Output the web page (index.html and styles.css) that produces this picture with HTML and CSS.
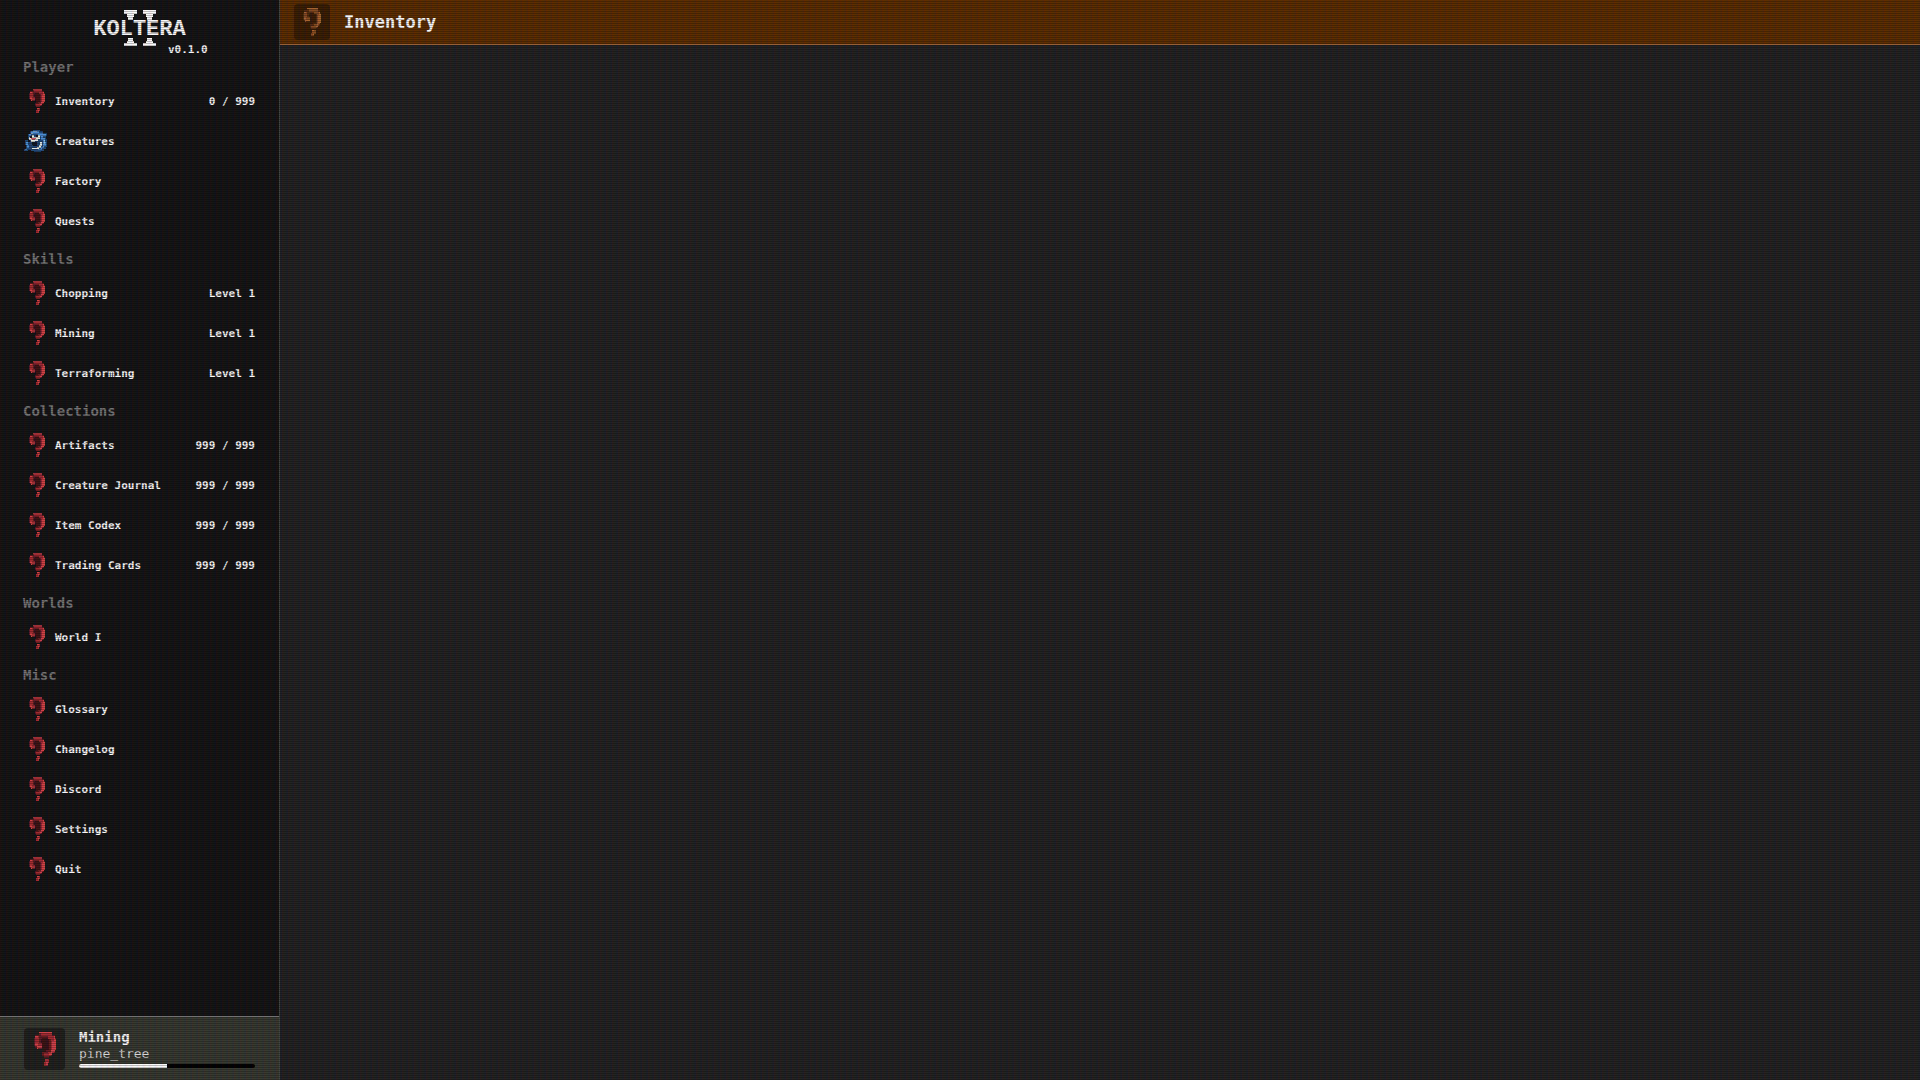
FILE: index.html
```html
<!DOCTYPE html>
<html lang="en">
<head>
  <meta charset="UTF-8">
  <meta name="viewport" content="width=device-width, initial-scale=1.0">
  <title>Koltera II</title>
  <link rel="stylesheet" href="styles.css">
</head>
<body>
  <!-- Shared sprites -->
  <svg class="sprites" aria-hidden="true">
    <symbol id="unknown" viewBox="0 0 16 24" shape-rendering="crispEdges">
      <path fill="var(--shade)" d="M4 3h8v10h-2v1H7v-3H4z"/>
      <path fill="var(--dark)" d="M4 0h9v2h2v2h1v9h-1v2h-2v2h-2v1H7v-1H6v-3h3v-1h2V5h-1V4H6v1H5v4h1v3H3v-1H1v-1H0V4h1V2h3z"/>
      <path fill="var(--mid)" d="M5 1h8v2h2v10h-1v2h-2v2H7v-2h3v-1h2V5h-2V3H4v5h2v3H3v-1H1V4h1V3h3z"/>
      <path fill="var(--light)" d="M4 0h9v1H4zM1 3h2v1H1zM14 3h1v2h1v8h-1v1h-2v2h-2v-1h1v-2h1V6h1zM1 8h2v2h3v1H3v1H2v-2H1z"/>
      <path fill="var(--mid)" d="M8 19h3v3h-1v2H7v-3h1z"/>
      <path fill="var(--light)" d="M8 19h2v1H8zM9 21h1v2H9z"/>
    </symbol>
    <symbol id="creature" viewBox="0 0 24 24" shape-rendering="crispEdges">
      <path fill="#214a78" d="M6 2h3V1h7v1h3v2h4v3h-1v3h1v8h-1v2h-2v2h-3v1h-7v-1H7v-1H4v1H0v-2h2v-4H1v-5h3v2h2v-3H4V5h2z"/>
      <path fill="#4d91d8" d="M7 2h8v2h4v1h3v2h-3v2h2v4h1v4h-2v2h-2v2h-4v-1h3v-2h2v-7h-2V7h-3V5H9V4H7v3H5V5h2zM2 13h2v3h1v3H3v2H1v-1h2v-4H2z"/>
      <path fill="#9bc8ef" d="M9 2h4v1H9zM7 4h2v1H7zM20 11h1v4h-1z"/>
      <path fill="#e8eee5" d="M5 8h3V6h2v2h4V6h2v4h-2v2h-3v1H7v-2H5zM16 13h2v4h-1v2h-2v1H8v-1h5v-1h2v-2h1z"/>
      <path fill="#101923" d="M6 7h2v2H6zM12 6h2v2h-2zM8 13h5v4H9v-1H8z"/>
      <path fill="#c4545c" d="M7 9h5v1h-1v1H8v-1H7z"/>
    </symbol>
  </svg>

  <div class="app">
    <aside class="sidebar">
      <header class="brand">
        <svg class="logo" viewBox="0 0 96 37" role="img" aria-label="II" shape-rendering="crispEdges">
          <path d="M32 0h13v4h-3v3h-1v3h-5V7h-1V4h-3zM51 0h13v4h-3v3h-1v3h-5V7h-1V4h-3zM36 28h5v3h1v2h3v3H32v-3h3v-2h1zM55 28h5v3h1v2h3v3H51v-3h3v-2h1z"/>
        </svg>
        <h1>KOLTERA</h1>
        <span class="version">v0.1.0</span>
      </header>

      <nav class="menu" aria-label="Main">
        <h2>Player</h2>
        <a href="#inventory"><svg><use href="#unknown"/></svg><span>Inventory</span><small>0 / 999</small></a>
        <a href="#creatures"><svg class="fish"><use href="#creature"/></svg><span>Creatures</span></a>
        <a href="#factory"><svg><use href="#unknown"/></svg><span>Factory</span></a>
        <a href="#quests"><svg><use href="#unknown"/></svg><span>Quests</span></a>

        <h2>Skills</h2>
        <a href="#chopping"><svg><use href="#unknown"/></svg><span>Chopping</span><small>Level 1</small></a>
        <a href="#mining"><svg><use href="#unknown"/></svg><span>Mining</span><small>Level 1</small></a>
        <a href="#terraforming"><svg><use href="#unknown"/></svg><span>Terraforming</span><small>Level 1</small></a>

        <h2>Collections</h2>
        <a href="#artifacts"><svg><use href="#unknown"/></svg><span>Artifacts</span><small>999 / 999</small></a>
        <a href="#journal"><svg><use href="#unknown"/></svg><span>Creature Journal</span><small>999 / 999</small></a>
        <a href="#codex"><svg><use href="#unknown"/></svg><span>Item Codex</span><small>999 / 999</small></a>
        <a href="#cards"><svg><use href="#unknown"/></svg><span>Trading Cards</span><small>999 / 999</small></a>

        <h2>Worlds</h2>
        <a href="#world-1"><svg><use href="#unknown"/></svg><span>World I</span></a>

        <h2>Misc</h2>
        <a href="#glossary"><svg><use href="#unknown"/></svg><span>Glossary</span></a>
        <a href="#changelog"><svg><use href="#unknown"/></svg><span>Changelog</span></a>
        <a href="#discord"><svg><use href="#unknown"/></svg><span>Discord</span></a>
        <a href="#settings"><svg><use href="#unknown"/></svg><span>Settings</span></a>
        <a href="#quit"><svg><use href="#unknown"/></svg><span>Quit</span></a>
      </nav>

      <section class="activity">
        <div class="tile"><svg><use href="#unknown"/></svg></div>
        <div class="activity-info">
          <strong>Mining</strong>
          <span id="task">pine_tree</span>
          <progress value="50" max="100" aria-labelledby="task"></progress>
        </div>
      </section>
    </aside>

    <main class="page">
      <header class="page-header">
        <div class="tile"><svg><use href="#unknown"/></svg></div>
        <h2>Inventory</h2>
      </header>
    </main>
  </div>
</body>
</html>
```

FILE: styles.css
```css
* { box-sizing: border-box; }
body {
  --shade: #3c1316;
  --dark: #651d22;
  --mid: #a22b32;
  --light: #d24348;
  margin: 0;
  background: #222;
  color: #fff;
  font-family: "DejaVu Sans Mono", "Liberation Mono", monospace;
  font-weight: bold;
}
h1, h2 { margin: 0; }
.sprites { position: absolute; width: 0; height: 0; }
.app { display: flex; min-height: 100vh; }

/* Sidebar */
.sidebar {
  display: flex;
  flex-direction: column;
  flex: 0 0 280px;
  background: #141414;
  border-right: 1px solid #454545;
}
.brand {
  position: relative;
  height: 57px;
  padding-top: 10px;
  text-align: center;
}
.logo { width: 96px; height: 37px; fill: #fff; }
.brand h1 {
  position: absolute;
  top: 15px;
  width: 100%;
  font-family: "Liberation Mono", monospace;
  font-size: 22px;
  line-height: 30px;
}
.version {
  position: absolute;
  top: 42px;
  left: 168px;
  font-size: 11px;
  line-height: 15px;
}
.menu { flex: 1; padding: 0 24px 0 23px; }
.menu h2 {
  height: 24px;
  margin-top: 8px;
  color: #777;
  font-size: 14px;
  line-height: 20px;
}
.menu h2:first-child { margin-top: 0; }
.menu a {
  display: flex;
  align-items: center;
  gap: 9px;
  height: 40px;
  padding-left: 5px;
  color: #fff;
  font-size: 11px;
  text-decoration: none;
}
.menu a:hover { background: #222; }
.menu svg { width: 18px; height: 24px; }
.menu .fish { width: 24px; height: 24px; margin: 0 -2px 0 -4px; }
.menu small { margin-left: auto; font-size: 11px; }

/* Current activity */
.activity {
  display: flex;
  align-items: center;
  gap: 14px;
  height: 64px;
  padding: 0 24px;
  background: #373a31;
  border-top: 1px solid #747474;
}
.tile {
  display: grid;
  place-items: center;
  width: 41px;
  height: 42px;
  border-radius: 4px;
  background: #20211e;
}
.tile svg { width: 24px; height: 34px; }
.activity-info { display: flex; flex: 1; flex-direction: column; }
.activity strong { font-size: 14px; line-height: 16px; }
.activity span { padding-bottom: 2px; color: #ddd; font-size: 13px; font-weight: normal; line-height: 17px; }
.activity progress {
  width: 100%;
  height: 4px;
  appearance: none;
  border: 0;
  border-radius: 2px;
  overflow: hidden;
  background: #000;
}
.activity progress::-webkit-progress-bar { background: #000; }
.activity progress::-webkit-progress-value { background: #fff; }

/* Page */
.page { flex: 1; min-width: 0; background: #222; }
.page-header {
  --shade: #3b1e08;
  --dark: #542c10;
  --mid: #864b20;
  --light: #a86530;
  display: flex;
  align-items: center;
  gap: 14px;
  height: 45px;
  padding: 0 14px;
  background: #5d2e00;
  border-bottom: 1px solid #996136;
}
.page-header .tile { width: 36px; height: 36px; background: #3b1e03; }
.page-header svg { width: 20px; height: 28px; }
.page-header h2 { font-size: 17px; line-height: 24px; }

/* CRT scanlines */
.app::after {
  content: "";
  position: fixed;
  inset: 0;
  z-index: 10;
  pointer-events: none;
  background:
    linear-gradient(rgba(18,16,16,0) 50%, rgba(0,0,0,0.25) 50%) 0 0 / 100% 2px,
    linear-gradient(90deg, rgba(255,0,0,0.06), rgba(0,255,0,0.02), rgba(0,0,255,0.06)) 0 0 / 6px 100%;
}
```
